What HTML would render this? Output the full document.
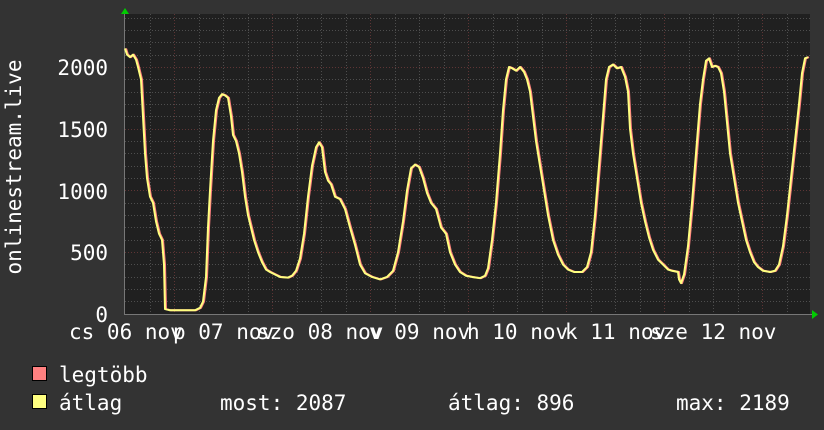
<!DOCTYPE html>
<html><head><meta charset="utf-8"><style>
html,body{margin:0;padding:0;background:#333;width:824px;height:430px;overflow:hidden}
svg{display:block}
text{font-family:"DejaVu Sans Mono","Liberation Mono",monospace;fill:#fff;font-size:21px}
</style></head><body>
<svg width="824" height="430" viewBox="0 0 824 430">
<defs>
<polyline id="d" fill="none" stroke-width="2" stroke-linejoin="round" vector-effect="non-scaling-stroke" points="125,2150 127,2100 130,2080 133,2100 136,2060 138,2000 141,1900 143,1600 145,1300 147,1100 150,950 153,900 156,750 159,650 162,600 164,400 165,40 170,30 195,30 200,50 203,100 206,300 208,700 210,1000 213,1400 216,1650 219,1750 222,1780 225,1770 228,1750 231,1600 233,1450 236,1400 239,1300 242,1150 245,950 248,800 251,700 254,600 258,500 262,420 266,360 270,340 275,320 280,300 288,295 292,310 296,350 300,450 304,650 308,950 312,1200 316,1350 319,1390 322,1350 325,1150 328,1080 331,1050 335,950 340,930 345,850 350,700 355,560 360,400 365,330 372,300 380,280 387,300 393,350 398,500 403,750 407,1000 411,1180 415,1210 419,1190 423,1100 427,980 431,900 436,850 441,700 446,650 450,500 455,400 460,340 466,310 472,300 480,290 485,310 488,370 492,600 496,900 500,1300 503,1650 506,1900 509,2000 512,1990 516,1970 520,2000 524,1960 527,1900 530,1800 533,1600 536,1400 540,1200 544,1000 548,800 553,600 558,480 563,400 568,360 574,340 582,340 587,380 591,500 595,800 599,1200 603,1600 606,1900 609,2000 613,2020 617,1990 621,2000 625,1920 628,1800 630,1500 633,1300 637,1100 641,900 645,750 649,620 653,520 658,440 663,400 668,360 672,350 678,340 679,280 681,250 684,320 688,550 692,900 696,1300 700,1700 703,1900 706,2050 709,2070 712,2000 715,2010 718,2000 721,1950 724,1800 727,1550 730,1300 734,1100 738,900 742,750 746,600 750,500 754,420 758,380 763,350 770,340 775,350 779,400 783,550 787,800 791,1100 795,1400 799,1700 802,1950 805,2070 808,2080"/>
</defs>
<rect x="0" y="0" width="824" height="430" fill="#333"/>
<rect x="125" y="14" width="685" height="301" fill="#202020"/>
<g stroke="#4e4e4e" stroke-width="1" stroke-dasharray="1,2">
<line x1="125" x2="810" y1="301.5" y2="301.5"/><line x1="125" x2="810" y1="289.5" y2="289.5"/><line x1="125" x2="810" y1="277.5" y2="277.5"/><line x1="125" x2="810" y1="264.5" y2="264.5"/>
<line x1="125" x2="810" y1="240.5" y2="240.5"/><line x1="125" x2="810" y1="227.5" y2="227.5"/><line x1="125" x2="810" y1="215.5" y2="215.5"/><line x1="125" x2="810" y1="203.5" y2="203.5"/>
<line x1="125" x2="810" y1="178.5" y2="178.5"/><line x1="125" x2="810" y1="166.5" y2="166.5"/><line x1="125" x2="810" y1="153.5" y2="153.5"/><line x1="125" x2="810" y1="141.5" y2="141.5"/>
<line x1="125" x2="810" y1="116.5" y2="116.5"/><line x1="125" x2="810" y1="104.5" y2="104.5"/><line x1="125" x2="810" y1="92.5" y2="92.5"/><line x1="125" x2="810" y1="79.5" y2="79.5"/>
<line x1="125" x2="810" y1="55.5" y2="55.5"/><line x1="125" x2="810" y1="42.5" y2="42.5"/><line x1="125" x2="810" y1="30.5" y2="30.5"/><line x1="125" x2="810" y1="18.5" y2="18.5"/>
<line y1="14" y2="315" x1="150.5" x2="150.5"/><line y1="14" y2="315" x1="199.5" x2="199.5"/><line y1="14" y2="315" x1="223.5" x2="223.5"/><line y1="14" y2="315" x1="248.5" x2="248.5"/>
<line y1="14" y2="315" x1="297.5" x2="297.5"/><line y1="14" y2="315" x1="321.5" x2="321.5"/><line y1="14" y2="315" x1="346.5" x2="346.5"/>
<line y1="14" y2="315" x1="395.5" x2="395.5"/><line y1="14" y2="315" x1="419.5" x2="419.5"/><line y1="14" y2="315" x1="444.5" x2="444.5"/>
<line y1="14" y2="315" x1="493.5" x2="493.5"/><line y1="14" y2="315" x1="517.5" x2="517.5"/><line y1="14" y2="315" x1="542.5" x2="542.5"/>
<line y1="14" y2="315" x1="591.5" x2="591.5"/><line y1="14" y2="315" x1="615.5" x2="615.5"/><line y1="14" y2="315" x1="640.5" x2="640.5"/>
<line y1="14" y2="315" x1="689.5" x2="689.5"/><line y1="14" y2="315" x1="713.5" x2="713.5"/><line y1="14" y2="315" x1="738.5" x2="738.5"/><line y1="14" y2="315" x1="787.5" x2="787.5"/>
</g>
<g stroke="#5e3535" stroke-width="1" stroke-dasharray="1,2">
<line x1="125" x2="810" y1="252.5" y2="252.5"/><line x1="125" x2="810" y1="190.5" y2="190.5"/><line x1="125" x2="810" y1="129.5" y2="129.5"/><line x1="125" x2="810" y1="67.5" y2="67.5"/>
<line y1="14" y2="315" x1="174.5" x2="174.5"/><line y1="14" y2="315" x1="272.5" x2="272.5"/><line y1="14" y2="315" x1="370.5" x2="370.5"/><line y1="14" y2="315" x1="468.5" x2="468.5"/>
<line y1="14" y2="315" x1="566.5" x2="566.5"/><line y1="14" y2="315" x1="664.5" x2="664.5"/><line y1="14" y2="315" x1="762.5" x2="762.5"/>
</g>
<g stroke="#777" stroke-width="1">
<line x1="125" x2="812" y1="314.5" y2="314.5"/><line x1="124.5" x2="124.5" y1="12" y2="315"/>
</g>
<polygon points="121,14 125,8 129,14" fill="#0c0"/>
<polygon points="812,310 818,314.5 812,319" fill="#0c0"/>
<g transform="translate(0,314) scale(1,-0.1235)">
<use href="#d" transform="translate(1,0)" stroke="#ff8080"/>
<use href="#d" stroke="#ffff80"/>
</g>
<g text-anchor="end">
<text x="108" y="75">2000</text><text x="108" y="137">1500</text><text x="108" y="199">1000</text><text x="108" y="260">500</text><text x="108" y="322">0</text>
</g>
<text transform="translate(21,167) rotate(-90)" text-anchor="middle">onlinestream.live</text>
<g>
<text x="69" y="339">cs 06 nov</text>
<text x="173" y="339">p 07 nov</text>
<text x="257" y="339">szo 08 nov</text>
<text x="369" y="339">v 09 nov</text>
<text x="467" y="339">h 10 nov</text>
<text x="565" y="339">k 11 nov</text>
<text x="650" y="339">sze 12 nov</text>
</g>
<rect x="32.5" y="366.5" width="14" height="14" fill="#ff8080" stroke="#000"/>
<rect x="32.5" y="394.5" width="14" height="14" fill="#ffff80" stroke="#000"/>
<text x="59" y="382">legtöbb</text>
<text x="59" y="410">átlag</text>
<text x="220" y="410">most: 2087</text>
<text x="448" y="410">átlag: 896</text>
<text x="676" y="410">max: 2189</text>
</svg>
</body></html>
